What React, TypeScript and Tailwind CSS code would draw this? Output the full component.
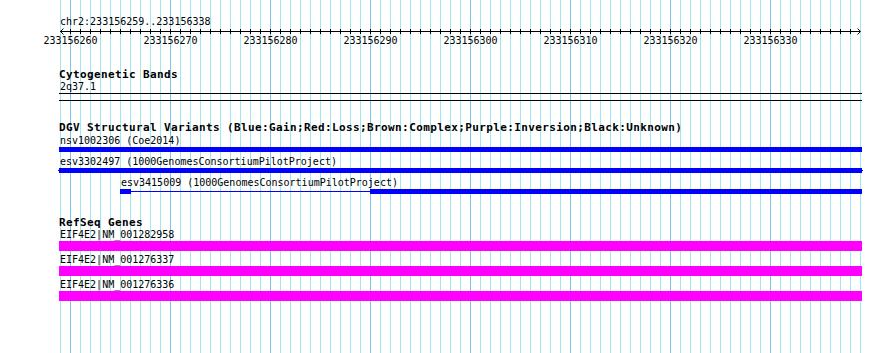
const START = 233156259;
const LEFT = 60;
const PX_PER_BP = 10;
const BP_COUNT = 80;

const gridXs = Array.from({ length: BP_COUNT + 1 }, (_, i) => LEFT + i * PX_PER_BP);
const labels = [260, 270, 280, 290, 300, 310, 320, 330].map((n) => 233156000 + n);

function Grid() {
  return (
    <svg className="absolute inset-0" width={890} height={353}>
      {gridXs.map((x, i) => {
        const major = (START + i) % 10 === 0;
        return (
          <line
            key={x}
            x1={x + 0.5}
            x2={x + 0.5}
            y1={0}
            y2={353}
            stroke={major ? '#7ec3ec' : '#a2e6ee'}
            strokeWidth={1}
          />
        );
      })}
    </svg>
  );
}

function Ruler() {
  // local coords: svg starts at page x=0, y=28
  const axisY = 3.5;
  return (
    <svg width={890} height={20} className="block -ml-[59px]">
      <line x1={LEFT} x2={LEFT + BP_COUNT * PX_PER_BP} y1={axisY} y2={axisY} stroke="#000" />
      <polyline
        points={`${LEFT + 3.5},${axisY - 3} ${LEFT + 0.5},${axisY} ${LEFT + 3.5},${axisY + 3}`}
        fill="none"
        stroke="#000"
      />
      <polyline
        points={`${LEFT + 797.5},${axisY - 3} ${LEFT + 800.5},${axisY} ${LEFT + 797.5},${axisY + 3}`}
        fill="none"
        stroke="#000"
      />
      {gridXs.slice(1, -1).map((x) => (
        <line key={x} x1={x + 0.5} x2={x + 0.5} y1={1} y2={6} stroke="#000" />
      ))}
      {labels.map((n) => (
        <text
          key={n}
          x={LEFT + (n - START) * PX_PER_BP + 0.5}
          y={15.5}
          textAnchor="middle"
          fontFamily="'DejaVu Sans Mono', monospace"
          fontSize={10}
          fill="#000"
        >
          {n}
        </text>
      ))}
    </svg>
  );
}

function Label({ children, className = '' }: { children: React.ReactNode; className?: string }) {
  return <div className={`text-[10px] leading-[10px] whitespace-pre ${className}`}>{children}</div>;
}

function TrackTitle({ children, className = '' }: { children: React.ReactNode; className?: string }) {
  return (
    <div className={`text-[11px] leading-[11px] font-bold tracking-[0.38px] whitespace-pre ${className}`}>
      {children}
    </div>
  );
}

const genes = ['EIF4E2|NM_001282958', 'EIF4E2|NM_001276337', 'EIF4E2|NM_001276336'];

export default function App() {
  return (
    <div className="relative w-[890px] h-[353px] overflow-hidden bg-white text-black font-['DejaVu_Sans_Mono',monospace]">
      <Grid />
      <div className="relative flex flex-col w-[803px] ml-[59px]">
        <Label className="mt-[17px] ml-px h-[11px]">chr2:233156259..233156338</Label>
        <Ruler />

        <TrackTitle className="mt-[21px]">Cytogenetic Bands</TrackTitle>
        <Label className="mt-[2px] ml-px">2q37.1</Label>
        <div className="mt-px h-[8px] border-y border-black" />

        <TrackTitle className="mt-[21px]">
          DGV Structural Variants (Blue:Gain;Red:Loss;Brown:Complex;Purple:Inversion;Black:Unknown)
        </TrackTitle>

        <Label className="mt-[3px] ml-px">nsv1002306 (Coe2014)</Label>
        <div className="mt-px h-[5px] bg-[#0000ff]" />

        <Label className="mt-[5px] ml-px">esv3302497 (1000GenomesConsortiumPilotProject)</Label>
        <div className="mt-px -ml-px w-[805px] h-[5px] flex items-center">
          <div className="w-px h-px bg-[#0000ff]" />
          <div className="flex-1 h-full bg-[#0000ff]" />
          <div className="w-px h-px bg-[#0000ff]" />
        </div>

        <Label className="mt-[5px] ml-[62px]">esv3415009 (1000GenomesConsortiumPilotProject)</Label>
        <div className="mt-px ml-[61px] h-[5px] flex items-center">
          <div className="w-[11px] h-full bg-[#0000ff]" />
          <div className="w-[239px] h-px bg-[#0000ff]" />
          <div className="flex-1 h-full bg-[#0000ff]" />
        </div>

        <TrackTitle className="mt-[23px]">RefSeq Genes</TrackTitle>
        {genes.map((g, i) => (
          <div key={g} className={i === 0 ? 'mt-[2px]' : 'mt-[4px]'}>
            <Label className="ml-px">{g}</Label>
            <div className="mt-px h-[10px] bg-[#ff00ff]" />
          </div>
        ))}
      </div>
    </div>
  );
}
